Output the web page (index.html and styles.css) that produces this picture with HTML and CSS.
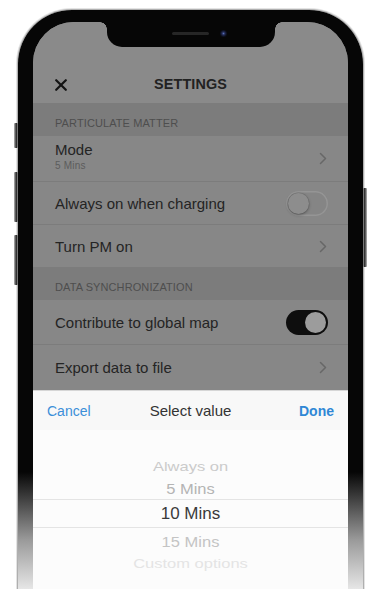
FILE: index.html
```html
<!DOCTYPE html>
<html>
<head>
<meta charset="utf-8">
<title>Settings</title>
<link rel="stylesheet" href="styles.css">
</head>
<body>
<div class="page">
  <div class="phone">
    <span class="btn btn-silent"></span>
    <span class="btn btn-volup"></span>
    <span class="btn btn-voldown"></span>
    <span class="btn btn-power"></span>
    <div class="screen">
      <div class="notch"><span class="speaker"></span><span class="camera"></span></div>
      <header class="nav">
        <svg class="close" width="12" height="12" viewBox="0 0 12 12"><path d="M1.2 1.2 L10.8 10.8 M10.8 1.2 L1.2 10.8" stroke="#141414" stroke-width="2.2" stroke-linecap="round" fill="none"/></svg>
        <h1 class="title">SETTINGS</h1>
        <span></span>
      </header>
      <div class="section">PARTICULATE MATTER</div>
      <div class="row row-mode">
        <div class="label"><div>Mode</div><div class="sub">5 Mins</div></div>
        <svg class="chev" width="8" height="13" viewBox="0 0 8 13"><path d="M1.5 1.5 L6.5 6.5 L1.5 11.5" stroke="#676767" stroke-width="1.5" fill="none" stroke-linecap="round" stroke-linejoin="round"/></svg>
      </div>
      <div class="row row-a">
        <span>Always on when charging</span>
        <span class="toggle off"><span class="knob"></span></span>
      </div>
      <div class="row row-a">
        <span>Turn PM on</span>
        <svg class="chev" width="8" height="13" viewBox="0 0 8 13"><path d="M1.5 1.5 L6.5 6.5 L1.5 11.5" stroke="#676767" stroke-width="1.5" fill="none" stroke-linecap="round" stroke-linejoin="round"/></svg>
      </div>
      <div class="section">DATA SYNCHRONIZATION</div>
      <div class="row row-b">
        <span>Contribute to global map</span>
        <span class="toggle on"><span class="knob"></span></span>
      </div>
      <div class="row row-c">
        <span>Export data to file</span>
        <svg class="chev" width="8" height="13" viewBox="0 0 8 13"><path d="M1.5 1.5 L6.5 6.5 L1.5 11.5" stroke="#676767" stroke-width="1.5" fill="none" stroke-linecap="round" stroke-linejoin="round"/></svg>
      </div>
      <div class="sheet">
        <div class="toolbar">
          <span class="cancel">Cancel</span>
          <span class="sheet-title">Select value</span>
          <span class="done">Done</span>
        </div>
        <div class="wheel">
          <div class="item w1"><span>Always on</span></div>
          <div class="item w2"><span>5 Mins</span></div>
          <div class="item sel"><span>10 Mins</span></div>
          <div class="item w4"><span>15 Mins</span></div>
          <div class="item w5"><span>Custom options</span></div>
        </div>
      </div>
    </div>
  </div>
</div>
</body>
</html>
```
FILE: styles.css
```css
* { box-sizing: border-box; margin: 0; padding: 0; }
html, body { width: 376px; height: 589px; overflow: hidden; background: #fff; }
body { font-family: "Liberation Sans", Arial, sans-serif; }

.page {
  width: 376px;
  height: 589px;
  overflow: hidden;
  padding: 10px 13px 0 18px;
}

.phone {
  position: relative;
  width: 345px;
  height: 640px;
  padding: 12px 15px 0 15px;
  border-radius: 54px 54px 0 0;
  background: linear-gradient(to bottom, #060606 0, #060606 462px, #9a9a9a 530px, #e6e6e6 579px);
  box-shadow: 0 0 0 1px rgba(140,140,140,0.6), 0 0 0 2px rgba(200,200,200,0.5);
}

.btn {
  position: absolute;
  border-radius: 1px;
  background: linear-gradient(to right, #b8b8b8, #4a4a4a 45%, #2a2a2a 60%, #9a9a9a);
}
.btn-silent { left: -4px; top: 113px; width: 4px; height: 25px; }
.btn-volup { left: -4px; top: 162px; width: 4px; height: 50px; }
.btn-voldown { left: -4px; top: 225px; width: 4px; height: 50px; }
.btn-power { right: -4px; top: 178px; width: 4px; height: 79px; background: linear-gradient(to left, #b8b8b8, #4a4a4a 45%, #2a2a2a 60%, #9a9a9a); }

.screen {
  position: relative;
  width: 315px;
  height: 100%;
  border-radius: 41px 41px 0 0;
  overflow: hidden;
  background: #878787;
  display: flex;
  flex-direction: column;
}

.notch {
  position: absolute;
  top: 0;
  left: 74px;
  width: 168px;
  height: 25px;
  background: #060606;
  border-radius: 0 0 15px 15px;
  display: flex;
  align-items: flex-start;
  padding: 8px 0 0 65px;
}
.notch::before, .notch::after {
  content: "";
  position: absolute;
  top: 0;
  width: 7px;
  height: 7px;
}
.notch::before { left: -7px; background: radial-gradient(circle at 0 100%, transparent 6.5px, #060606 7px); }
.notch::after { right: -7px; background: radial-gradient(circle at 100% 100%, transparent 6.5px, #060606 7px); }
.speaker { width: 37px; height: 3px; margin-top: 2px; border-radius: 2px; background: #262626; margin-right: 11px; }
.camera { width: 7px; height: 7px; border-radius: 50%; background: radial-gradient(circle, #5a6fb8 0, #28325e 1.3px, #10142a 2.6px, #0b0d18 3.5px); }

.nav {
  height: 81px;
  flex: none;
  background: #8a8a8a;
  display: grid;
  grid-template-columns: 1fr auto 1fr;
  align-items: center;
  padding: 52px 22px 9px 22px;
}
.close { display: block; margin-top: 2px; }
.title {
  font-size: 14.4px;
  line-height: 20px;
  font-weight: bold;
  color: #222;
  letter-spacing: 0.1px;
}

.section {
  height: 33px;
  flex: none;
  background: #7c7c7c;
  display: flex;
  align-items: flex-end;
  padding: 0 22px 6px 22px;
  font-size: 11px;
  line-height: 13px;
  color: #4e4e4e;
  letter-spacing: 0.1px;
}

.row {
  flex: none;
  display: flex;
  align-items: center;
  justify-content: space-between;
  padding: 0 20px 0 22px;
  background: #878787;
  border-top: 1px solid #7c7c7c;
  font-size: 15px;
  color: #242424;
}
.section + .row { border-top: none; }
.row-mode { height: 45px; }
.row-a { height: 43px; }
.row-b { height: 44px; }
.row-c { height: 46px; }

.label { padding-bottom: 4px; }
.label div:first-child { line-height: 18px; }
.sub { font-size: 10px; line-height: 13px; color: #5c5c5c; letter-spacing: 0.2px; }
.chev { display: block; margin-right: 1px; }

.toggle {
  width: 42px;
  height: 25px;
  border-radius: 13px;
  display: flex;
  align-items: center;
  padding: 0 2px;
}
.toggle .knob {
  width: 21px;
  height: 21px;
  border-radius: 50%;
}
.toggle.off {
  justify-content: flex-start;
  background: #858585;
  box-shadow: inset 0 0 0 1.5px #959595;
}
.toggle.off .knob {
  background: #8d8d8d;
  box-shadow: 0 1px 3px rgba(0,0,0,0.35), 0 0 0 0.5px rgba(0,0,0,0.1);
}
.toggle.on {
  justify-content: flex-end;
  background: #0e0e0e;
}
.toggle.on .knob {
  background: #9c9c9c;
}

.sheet {
  flex: 1;
  background: #fcfcfc;
  display: flex;
  flex-direction: column;
}
.toolbar {
  height: 40px;
  flex: none;
  background: #f8f8f8;
  border-top: 1px solid #d6d6d6;
  display: grid;
  grid-template-columns: 1fr auto 1fr;
  align-items: center;
  padding: 0 14px;
  font-size: 14px;
}
.cancel { color: #3c8fd8; }
.sheet-title { font-size: 15px; color: #333; }
.done { color: #2f87d5; font-weight: bold; justify-self: end; }

.wheel {
  padding-top: 26px;
  display: flex;
  flex-direction: column;
  align-items: center;
  font-size: 16.5px;
}
.item {
  width: 100%;
  display: flex;
  align-items: center;
  justify-content: center;
}
.item span { display: block; line-height: 20px; }
.w1 { height: 20px; color: #cbcbcb; }
.w1 span { transform: scaleY(0.82); }
.w2 { height: 23px; color: #b4b4b4; }
.w2 span { transform: scaleY(0.93); }
.sel {
  height: 29px;
  color: #3a3a3a;
  font-size: 17px;
  border-top: 1px solid #e4e4e4;
  border-bottom: 1px solid #e4e4e4;
}
.w4 { height: 25px; color: #c4c4c4; }
.w4 span { transform: scaleY(0.93); }
.w5 { height: 20px; color: #e4e4e4; }
.w5 span { transform: scaleY(0.82); }
```
